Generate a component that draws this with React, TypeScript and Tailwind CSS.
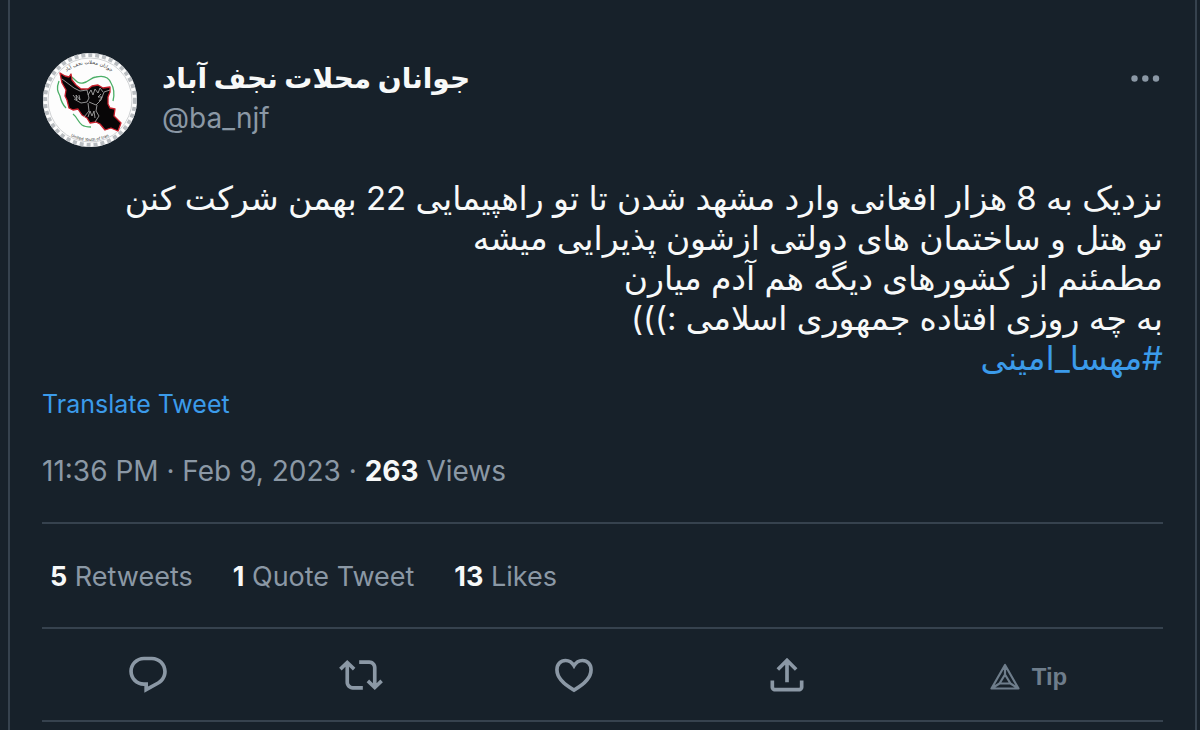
import type { ReactNode } from 'react';

const tweetLines = [
  'نزدیک به 8 هزار افغانی وارد مشهد شدن تا تو راهپیمایی 22 بهمن شرکت کنن',
  'تو هتل و ساختمان های دولتی ازشون پذیرایی میشه',
  'مطمئنم از کشورهای دیگه هم آدم میارن',
  'به چه روزی افتاده جمهوری اسلامی :)))',
];

const stats = [
  { count: '5', label: 'Retweets' },
  { count: '1', label: 'Quote Tweet' },
  { count: '13', label: 'Likes' },
];

function Avatar() {
  return (
    <svg viewBox="0 0 96 96" className="size-24 shrink-0" role="img" aria-label="Profile picture">
      <defs>
        <path id="arc-top" d="M11 48a36 36 0 0 1 72 0" />
        <path id="arc-bottom" d="M7 48a41 41 0 0 0 82 0" />
      </defs>
      <circle cx="48" cy="48" r="47" fill="#fdfdfd" />
      <circle cx="48" cy="48" r="45" fill="none" stroke="#b9bdc1" strokeWidth="4" strokeDasharray="4 3" />
      <circle cx="48" cy="48" r="42" fill="none" stroke="#d0d2d4" strokeWidth="1" />
      <text fontSize="5" fill="#333" fontFamily="DejaVu Sans, sans-serif" textAnchor="middle">
        <textPath href="#arc-top" startOffset="50%">جوانان محلات نجف آباد</textPath>
      </text>
      <text fontSize="4" fill="#333" fontFamily="DejaVu Sans, sans-serif" textAnchor="middle">
        <textPath href="#arc-bottom" startOffset="50%">United Youth of Iran</textPath>
      </text>
      <path d="M17 29c-3 8-1 11 1 15 1 5 2 8 6 12M30 25c4 4 6 7 11 6 6-1 8-6 13-6 8-2 13 1 15 6 3 5 4 10 2 18M31 62c4 3 5 8 9 11 3 2 6 2 9 2" fill="none" stroke="#4bae67" strokeWidth="1.3" />
      <path d="M18 21l5 3 4 1 2-3 1 6 4 5 5 4 7 0 4-3 6-1 5 3 7-1 0 5-2 5 0 7 2 4 5 1-1 7 7 7-3 8-7-3-6 2-5-6-4-2-6 1-3-5-5-3-4-6-5 1-4-2-2-8-2-4 1-6-4-7z" fill="#080607" stroke="#c8202c" strokeWidth="1.3" strokeLinejoin="round" />
      <path d="M20 27l12 9 6 3 7-1 2 8-2 4-6 1-7-4M47 50l7 3 5-5 3-8 6-2M46 51l1 8-5 6M55 53l-1 6 3 5-4 6M31 43l4 5-1-5 4 5-1-5M46 43l3-5 2 5 2-6 3 4 2-5 3 4M59 42l-3 3 4 0-3 4M46 65l2-6 2 5 2-5 1 7" fill="none" stroke="#b5b5b5" strokeWidth="0.8" strokeLinejoin="round" />
    </svg>
  );
}

function Action({ label, children }: { label: string; children: ReactNode }) {
  return (
    <button type="button" aria-label={label} className="flex items-center justify-center">
      <svg viewBox="0 0 24 24" className="size-11" fill="currentColor" aria-hidden="true">{children}</svg>
    </button>
  );
}

export default function App() {
  return (
    <div className="min-h-screen bg-[#17212a] pr-[3px] pl-2 font-['Inter','DejaVu_Sans',sans-serif] text-[#8b98a5]">
      <main className="min-h-screen border-x-2 border-[#36424e] px-8">
        <article>
          <header className="flex items-start pt-[52px]">
            <Avatar />
            <div className="min-w-0 flex-1 pt-1.5 pl-6">
              <h1 className="text-[28px] leading-10 font-bold text-[#f7f9f9]">
                <a href="#profile">جوانان محلات نجف آباد</a>
              </h1>
              <a href="#profile" className="block text-[28px] leading-10">@ba_njf</a>
            </div>
            <button type="button" aria-label="More" className="mt-2 flex h-9 w-9 items-center justify-center">
              <svg viewBox="0 0 36 36" className="size-9 shrink-0" fill="currentColor" aria-hidden="true">
                <circle cx="7.5" cy="18.5" r="3.2" />
                <circle cx="18.3" cy="18.5" r="3.2" />
                <circle cx="29" cy="18.5" r="3.2" />
              </svg>
            </button>
          </header>

          <div dir="rtl" lang="fa" className="pt-[30px] text-[33px] leading-10 text-[#f7f9f9]">
            {tweetLines.map((line) => <p key={line}>{line}</p>)}
            <p><a href="#hashtag" className="text-[#3b9bea]">#مهسا_امینی</a></p>
          </div>
          <a href="#translate" className="mt-1.5 inline-block text-[25px] leading-10 text-[#3b9bea]">Translate Tweet</a>

          <p className="pt-[27px] pb-[31px] text-[28px] leading-10">
            11:36 PM · Feb 9, 2023 · <b className="font-bold text-[#f7f9f9]">263</b> Views
          </p>

          <div className="flex gap-10 border-y-2 border-[#36424e] pt-[33px] pb-[30px] pl-2 text-[27px] leading-10">
            {stats.map(({ count, label }) => (
              <a key={label} href="#stats"><b className="font-bold text-[#f7f9f9]">{count}</b> {label}</a>
            ))}
          </div>

          <div className="grid grid-cols-[19fr_19fr_19fr_19fr_24fr] border-b-2 border-[#36424e] pt-6 pb-[23px]">
            <Action label="Reply">
              <path d="M1.751 10c0-4.42 3.584-8 8.005-8h4.366c4.49 0 8.129 3.64 8.129 8.13 0 2.96-1.607 5.68-4.196 7.11l-8.054 4.46v-3.69h-.067c-4.49.1-8.183-3.51-8.183-8.01zm8.005-6c-3.317 0-6.005 2.69-6.005 6 0 3.37 2.77 6.08 6.138 6.01l.351-.01h1.761v2.3l5.087-2.81c1.951-1.08 3.163-3.13 3.163-5.36 0-3.39-2.744-6.13-6.129-6.13H9.756z" />
            </Action>
            <Action label="Retweet">
              <path d="M4.5 3.88l4.432 4.14-1.364 1.46L5.5 7.55V16c0 1.1.896 2 2 2H13v2H7.5c-2.209 0-4-1.79-4-4V7.55L1.432 9.48.068 8.02 4.5 3.88zM16.5 6H11V4h5.5c2.209 0 4 1.79 4 4v8.45l2.068-1.93 1.364 1.46-4.432 4.14-4.432-4.14 1.364-1.46 2.068 1.93V8c0-1.1-.896-2-2-2z" />
            </Action>
            <Action label="Like">
              <path d="M12 20.2C6 16.9 2.7 12.8 2.7 9.2c0-3.1 2-5.1 4.7-5.1 1.9 0 3.5 1 4.6 2.8 1.1-1.8 2.7-2.8 4.6-2.8 2.7 0 4.7 2 4.7 5.1 0 3.6-3.3 7.7-9.3 11z" fill="none" stroke="currentColor" strokeWidth="2" />
            </Action>
            <Action label="Share">
              <path d="M12 2.59l5.7 5.7-1.41 1.42L13 6.41V16h-2V6.41l-3.3 3.3-1.41-1.42L12 2.59zM21 15v3.5c0 1.38-1.12 2.5-2.5 2.5h-13C4.11 21 3 19.88 3 18.5V15h2v3.5c0 .28.22.5.5.5h13c.28 0 .5-.22.5-.5V15h2z" />
            </Action>
            <button type="button" className="flex items-center justify-center gap-3 pt-1 font-['Liberation_Sans',sans-serif] text-2xl font-bold text-[#6e7d8b]">
              <svg viewBox="0 0 30 28" className="h-7 w-[30px]" fill="none" stroke="currentColor" strokeWidth="2.2" strokeLinejoin="round" aria-hidden="true">
                <path d="M15 2L1.5 25.5h27zM15 2v9M1.5 25.5l8-5M28.5 25.5l-8-5M15 11.5l-5.5 9h11z" />
              </svg>
              Tip
            </button>
          </div>
        </article>
      </main>
    </div>
  );
}
